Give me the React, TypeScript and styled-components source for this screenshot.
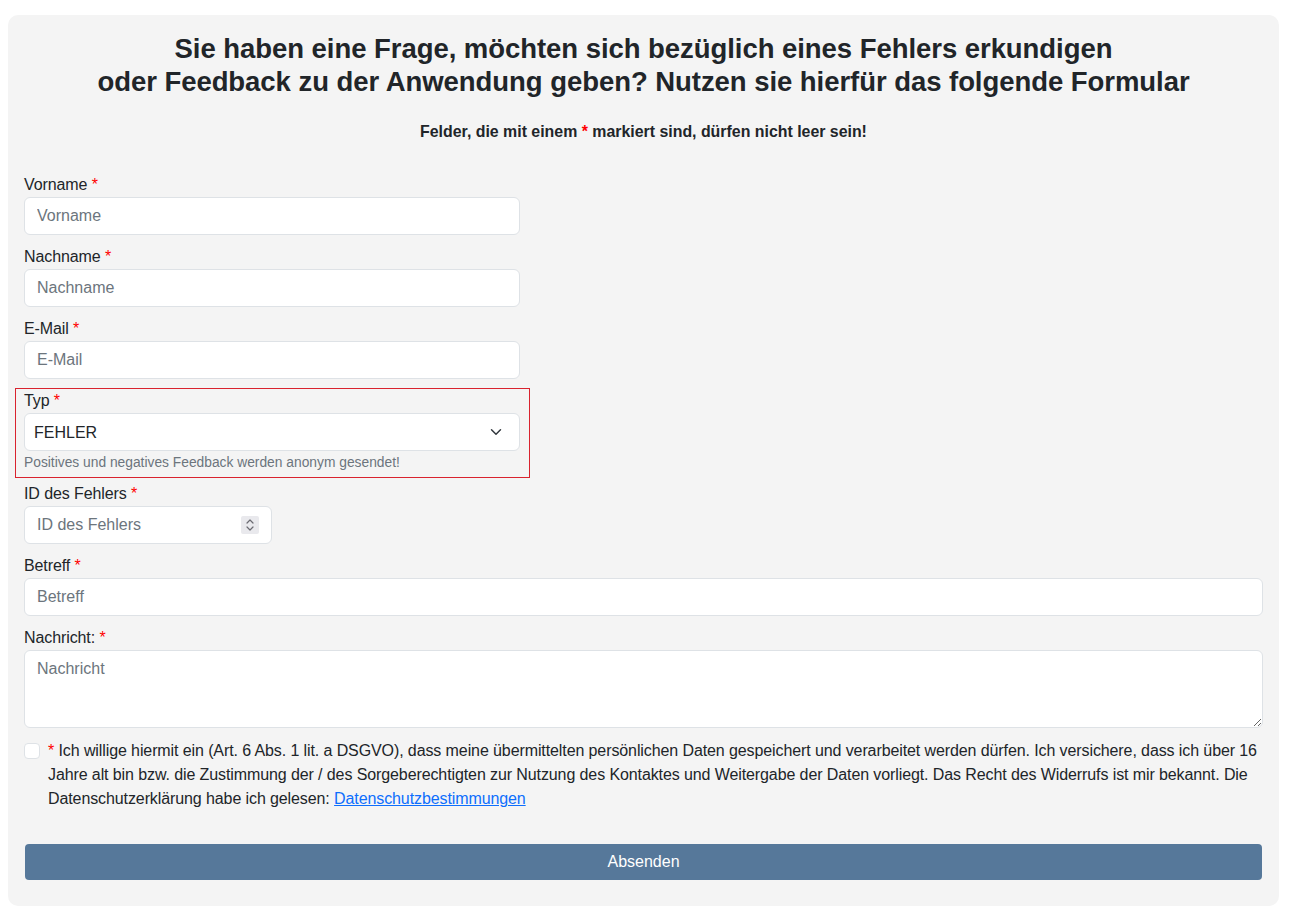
import React from "react";
import styled, { createGlobalStyle } from "styled-components";

const GlobalStyle = createGlobalStyle`
  * {
    box-sizing: border-box;
  }

  body {
    margin: 0;
    background: #ffffff;
    color: #212529;
    font-family: "Liberation Sans", Arial, sans-serif;
    font-size: 16px;
    line-height: 1.5;
  }
`

const Page = styled.div`
  padding: 15px 18px 18px 8px;
`

const Card = styled.div`
  background: #f4f4f4;
  border-radius: 10px;
  padding: 17px 16px 26px;
`

const Heading = styled.h3`
  margin: 0 0 24px;
  font-size: 27.5px;
  line-height: 33px;
  font-weight: 700;
  text-align: center;
  letter-spacing: -0.05px;
`

const Hint = styled.h6`
  margin: 0 0 32px;
  font-size: 15.9px;
  line-height: 19px;
  font-weight: 700;
  text-align: center;
`

const Required = styled.span`
  color: #ff0000;
`

const Form = styled.form`
  display: flex;
  flex-direction: column;
`

const Group = styled.div`
  margin-bottom: 10px;
`

const FocusGroup = styled.div`
  box-sizing: content-box;
  width: 40%;
  margin: -1px 0 4px -9px;
  padding: 0 9px 4px 8px;
  border: 1px solid #d9232e;
`

const Label = styled.label`
  display: block;
  line-height: 24px;
  letter-spacing: -0.1px;
`

const Input = styled.input<{ $width?: string }>`
  display: block;
  width: ${(p) => p.$width ?? "100%"};
  height: 38px;
  padding: 6px 12px;
  font-family: inherit;
  font-size: 16px;
  color: #212529;
  background: #ffffff;
  border: 1px solid #dee2e6;
  border-radius: 6px;
  outline: none;

  &::placeholder {
    color: #6c757d;
  }
`

const SelectBox = styled.select`
  display: block;
  width: 100%;
  height: 38px;
  padding: 6px 36px 6px 9px;
  font-family: inherit;
  font-size: 16px;
  color: #212529;
  background-color: #ffffff;
  background-image: url("data:image/svg+xml,%3csvg xmlns='http://www.w3.org/2000/svg' viewBox='0 0 16 16'%3e%3cpath fill='none' stroke='%23343a40' stroke-linecap='round' stroke-linejoin='round' stroke-width='2' d='m2 5 6 6 6-6'/%3e%3c/svg%3e");
  background-repeat: no-repeat;
  background-position: right 16px center;
  background-size: 14px 12px;
  border: 1px solid #dee2e6;
  border-radius: 6px;
  appearance: none;
  outline: none;
`

const HelpText = styled.div`
  margin-top: 1px;
  font-size: 13.8px;
  line-height: 21px;
  color: #6c757d;
`

const NumberWrap = styled.div`
  position: relative;
  width: 20%;
`

const Spinner = styled.span`
  position: absolute;
  top: 10px;
  right: 13px;
  width: 18px;
  height: 18px;
  display: flex;
  align-items: center;
  justify-content: center;
  background: #e9e9ed;
  border-radius: 2px;
`

const TextArea = styled.textarea`
  display: block;
  width: 100%;
  height: 78px;
  padding: 6px 12px;
  font-family: inherit;
  font-size: 16px;
  line-height: 1.5;
  color: #212529;
  background: #ffffff;
  border: 1px solid #dee2e6;
  border-radius: 6px;
  resize: vertical;
  outline: none;

  &::placeholder {
    color: #6c757d;
  }
`

const Consent = styled.div`
  display: flex;
  gap: 8px;
  margin-top: 1px;
  letter-spacing: -0.1px;
`

const Check = styled.input`
  flex: none;
  width: 16px;
  height: 16px;
  margin: 4px 0 0;
  appearance: none;
  background: #ffffff;
  border: 1px solid #dee2e6;
  border-radius: 4px;
`

const ConsentText = styled.label`
  line-height: 24px;
`

const PrivacyLink = styled.a`
  color: #0d6efd;
  text-decoration: underline;
`

const SubmitButton = styled.button`
  margin: 33px 1px 0;
  height: 36px;
  font-family: inherit;
  font-size: 16px;
  color: #ffffff;
  background: #56789a;
  border: none;
  border-radius: 4px;
`

function SpinIcon() {
  return (
    <svg width="10" height="14" viewBox="0 0 10 14" fill="none" stroke="#6b6b72" strokeWidth="1.2" strokeLinecap="round" strokeLinejoin="round">
      <path d="M2 5 5 2l3 3" />
      <path d="M2 9l3 3 3-3" />
    </svg>
  );
}

export default function App() {
  return (
    <>
      <GlobalStyle />
      <Page>
        <Card>
          <Heading>
            Sie haben eine Frage, möchten sich bezüglich eines Fehlers erkundigen
            <br />
            oder Feedback zu der Anwendung geben? Nutzen sie hierfür das folgende Formular
          </Heading>
          <Hint>
            Felder, die mit einem <Required>*</Required> markiert sind, dürfen nicht leer sein!
          </Hint>

          <Form onSubmit={(e) => e.preventDefault()}>
            <Group>
              <Label htmlFor="vorname">Vorname <Required>*</Required></Label>
              <Input id="vorname" placeholder="Vorname" $width="40%" />
            </Group>

            <Group>
              <Label htmlFor="nachname">Nachname <Required>*</Required></Label>
              <Input id="nachname" placeholder="Nachname" $width="40%" />
            </Group>

            <Group>
              <Label htmlFor="email">E-Mail <Required>*</Required></Label>
              <Input id="email" type="email" placeholder="E-Mail" $width="40%" />
            </Group>

            <FocusGroup>
              <Label htmlFor="typ">Typ <Required>*</Required></Label>
              <SelectBox id="typ" defaultValue="FEHLER">
                <option value="FEHLER">FEHLER</option>
                <option value="FRAGE">FRAGE</option>
                <option value="FEEDBACK">FEEDBACK</option>
              </SelectBox>
              <HelpText>Positives und negatives Feedback werden anonym gesendet!</HelpText>
            </FocusGroup>

            <Group>
              <Label htmlFor="fehlerid">ID des Fehlers <Required>*</Required></Label>
              <NumberWrap>
                <Input id="fehlerid" inputMode="numeric" placeholder="ID des Fehlers" />
                <Spinner>
                  <SpinIcon />
                </Spinner>
              </NumberWrap>
            </Group>

            <Group>
              <Label htmlFor="betreff">Betreff <Required>*</Required></Label>
              <Input id="betreff" placeholder="Betreff" />
            </Group>

            <Group>
              <Label htmlFor="nachricht">Nachricht: <Required>*</Required></Label>
              <TextArea id="nachricht" placeholder="Nachricht" />
            </Group>

            <Consent>
              <Check id="consent" type="checkbox" />
              <ConsentText htmlFor="consent">
                <Required>*</Required> Ich willige hiermit ein (Art. 6 Abs. 1 lit. a DSGVO), dass meine übermittelten
                persönlichen Daten gespeichert und verarbeitet werden dürfen. Ich versichere, dass ich über 16 Jahre alt
                bin bzw. die Zustimmung der / des Sorgeberechtigten zur Nutzung des Kontaktes und Weitergabe der Daten
                vorliegt. Das Recht des Widerrufs ist mir bekannt. Die Datenschutzerklärung habe ich gelesen:{" "}
                <PrivacyLink href="#datenschutz">Datenschutzbestimmungen</PrivacyLink>
              </ConsentText>
            </Consent>

            <SubmitButton type="submit">Absenden</SubmitButton>
          </Form>
        </Card>
      </Page>
    </>
  );
}
